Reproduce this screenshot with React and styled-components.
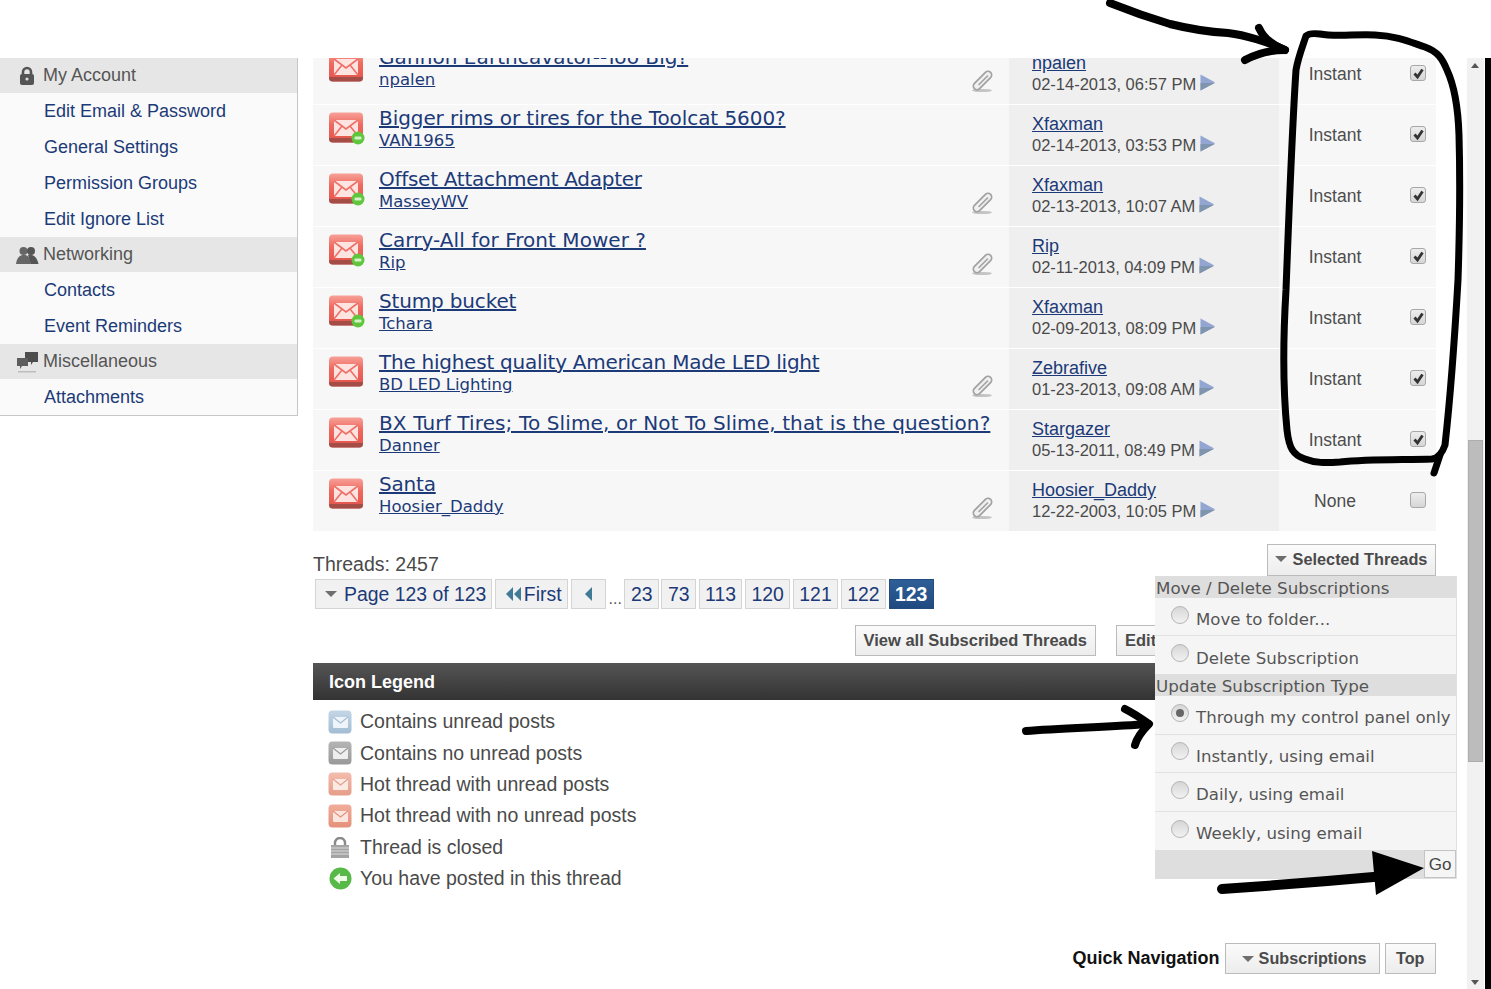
import styled, { createGlobalStyle } from "styled-components";

const GlobalStyle = createGlobalStyle`
  html, body {
    margin: 0;
    padding: 0;
    background: #fff;
    overflow: hidden;
  }
  body {
    font-family: "Liberation Sans", Arial, sans-serif;
    color: #3e3e3e;
  }
`;

const threads = [
  { title: "Gannon Earthcavator--Too Big?", track: 0.07, author: "npalen", by: "npalen", date: "02-14-2013, 06:57 PM", posted: false, clip: true, sub: "Instant", on: true },
  { title: "Bigger rims or tires for the Toolcat 5600?", track: -0.07, author: "VAN1965", by: "Xfaxman", date: "02-14-2013, 03:53 PM", posted: true, clip: false, sub: "Instant", on: true },
  { title: "Offset Attachment Adapter", track: -0.28, author: "MasseyWV", by: "Xfaxman", date: "02-13-2013, 10:07 AM", posted: true, clip: true, sub: "Instant", on: true },
  { title: "Carry-All for Front Mower ?", track: 0.04, author: "Rip", by: "Rip", date: "02-11-2013, 04:09 PM", posted: true, clip: true, sub: "Instant", on: true },
  { title: "Stump bucket", track: -0.16, author: "Tchara", by: "Xfaxman", date: "02-09-2013, 08:09 PM", posted: true, clip: false, sub: "Instant", on: true },
  { title: "The highest quality American Made LED light", track: -0.25, author: "BD LED Lighting", by: "Zebrafive", date: "01-23-2013, 09:08 AM", posted: false, clip: true, sub: "Instant", on: true },
  { title: "BX Turf Tires; To Slime, or Not To Slime, that is the question?", track: 0.13, author: "Danner", by: "Stargazer", date: "05-13-2011, 08:49 PM", posted: false, clip: false, sub: "Instant", on: true },
  { title: "Santa", track: -0.2, author: "Hoosier_Daddy", by: "Hoosier_Daddy", date: "12-22-2003, 10:05 PM", posted: false, clip: true, sub: "None", on: false },
];

const sideNav = [
  { name: "My Account", icon: "lock", items: ["Edit Email & Password", "General Settings", "Permission Groups", "Edit Ignore List"] },
  { name: "Networking", icon: "people", items: ["Contacts", "Event Reminders"] },
  { name: "Miscellaneous", icon: "chat", items: ["Attachments"] },
];

const legend = [
  { label: "Contains unread posts", top: "#c3d6e6", bottom: "#a3bdd3", flap: "#eef4f9" },
  { label: "Contains no unread posts", top: "#b5b5b5", bottom: "#999", flap: "#eeeeee" },
  { label: "Hot thread with unread posts", top: "#f3bdae", bottom: "#e59d89", flap: "#fbeae4" },
  { label: "Hot thread with no unread posts", top: "#f0ad9a", bottom: "#e4907a", flap: "#fbe6df" },
  { label: "Thread is closed", lock: true },
  { label: "You have posted in this thread", back: true },
];

const menuGroups = [
  { title: "Move / Delete Subscriptions", rowH: 38, options: [{ label: "Move to folder..." }, { label: "Delete Subscription" }] },
  {
    title: "Update Subscription Type",
    rowH: 38.5,
    options: [
      { label: "Through my control panel only", checked: true },
      { label: "Instantly, using email" },
      { label: "Daily, using email" },
      { label: "Weekly, using email" },
    ],
  },
];

const pages = ["23", "73", "113", "120", "121", "122"];

const MailIcon = () => (
  <svg width="36" height="31" viewBox="0 0 36 31">
    <defs>
      <linearGradient id="hotMail" x1="0" y1="0" x2="0" y2="1">
        <stop offset="0" stopColor="#f7a198" />
        <stop offset="0.4" stopColor="#ef6a60" />
        <stop offset="1" stopColor="#e2524a" />
      </linearGradient>
    </defs>
    <rect x="1" y="0.5" width="34" height="30" rx="4" fill="url(#hotMail)" />
    <path d="M1 26 H35 V27 a3.5 3.5 0 0 1 -3.5 3.5 H4.5 A3.5 3.5 0 0 1 1 27 Z" fill="#8f4a44" opacity="0.75" />
    <rect x="6" y="8" width="24" height="16" fill="#fde4e0" />
    <path d="M6 8 L18 17 L30 8 M6 24 L14 14 M30 24 L22 14" fill="none" stroke="#ee6f66" strokeWidth="1.6" />
  </svg>
);

const LegendMail = ({ top, bottom, flap }) => (
  <svg width="24" height="24" viewBox="0 0 24 24">
    <defs>
      <linearGradient id={`legend${bottom.slice(1)}`} x1="0" y1="0" x2="0" y2="1">
        <stop offset="0" stopColor={top} />
        <stop offset="1" stopColor={bottom} />
      </linearGradient>
    </defs>
    <rect x="0.5" y="0.5" width="23" height="23" rx="4" fill={`url(#legend${bottom.slice(1)})`} />
    <rect x="5" y="7" width="15" height="11" rx="1" fill={flap} />
    <path d="M5 7 L12.5 13 L20 7" fill="none" stroke={bottom} strokeWidth="1.2" />
  </svg>
);

const PostedDot = () => (
  <svg width="14" height="14" viewBox="0 0 14 14">
    <circle cx="7" cy="7" r="6.5" fill="#5fc63d" />
    <rect x="3.5" y="5.5" width="7" height="3" rx="1.2" fill="#d5f2c9" />
  </svg>
);

const ClipIcon = () => (
  <svg width="24" height="24" viewBox="0 0 24 24">
    <ellipse cx="11" cy="21.5" rx="10" ry="1.6" fill="#c4c4c4" />
    <path d="M6 17 L17 6" fill="none" stroke="#a2a2a2" strokeWidth="9" strokeLinecap="round" />
    <path d="M6 17 L17 6" fill="none" stroke="#f0f0f0" strokeWidth="5.5" strokeLinecap="round" />
    <path d="M8 15.5 L16.5 7" fill="none" stroke="#a2a2a2" strokeWidth="1.6" strokeLinecap="round" />
  </svg>
);

const NextSvg = styled.svg`
  flex: none;
  margin-top: -4px;
`;

const NextIcon = () => (
  <NextSvg width="15" height="17" viewBox="0 0 15 17">
    <path d="M0.5 0.5 L14.5 8 Q15 8.5 14.5 9 L0.5 16.5 Z" fill="#93a6d2" />
    <path d="M0.5 9 L14.7 9 L0.5 16.5 Z" fill="#7f95ae" />
  </NextSvg>
);

const DoubleLeft = () => (
  <svg width="15" height="14" viewBox="0 0 15 14">
    <path d="M7 0 V14 L0 7 Z M15 0 V14 L8 7 Z" fill="#3f7a96" />
  </svg>
);

const SideIcon = ({ name }) => {
  if (name === "lock") {
    return (
      <svg width="18" height="20" viewBox="0 0 18 20">
        <path d="M5 9 V6 a4 4 0 0 1 8 0 V9" fill="none" stroke="#555" strokeWidth="2.6" />
        <rect x="2" y="8" width="14" height="11" rx="2" fill="#555" />
        <circle cx="9" cy="13" r="1.6" fill="#ddd" />
      </svg>
    );
  }
  if (name === "people") {
    return (
      <svg width="24" height="20" viewBox="0 0 24 20">
        <circle cx="8.5" cy="6" r="4" fill="#666" />
        <circle cx="16" cy="6" r="4" fill="#555" />
        <path d="M1 19 C2 11 6 10 9 10 C12 10 15 11 16 19 Z" fill="#666" />
        <path d="M13 10 C18 9 22 12 23.5 19 L16 19 Z" fill="#555" />
      </svg>
    );
  }
  return (
    <svg width="22" height="22" viewBox="0 0 22 22">
      <path d="M9 1 H22 V11 H17 L15 14 V11 H9 Z" fill="#4d4d4d" />
      <path d="M1 7 H12 V15 H6 L4 18 V15 H1 Z" fill="#5d5d5d" />
      <rect x="2" y="20" width="18" height="1.5" fill="#bdbdbd" />
    </svg>
  );
};

const ClosedIcon = () => (
  <svg width="22" height="21" viewBox="0 0 22 21">
    <path d="M6 9 V6 a5 5 0 0 1 10 0 V9" fill="none" stroke="#8a8a8a" strokeWidth="2.4" />
    <rect x="2" y="8" width="18" height="13" fill="#a4a4a4" />
    <path d="M2 11 H20 M2 14 H20 M2 17 H20" stroke="#dcdcdc" strokeWidth="1" />
  </svg>
);

const BackIcon = () => (
  <svg width="23" height="23" viewBox="0 0 23 23">
    <circle cx="11.5" cy="11.5" r="11" fill="#57b947" />
    <path d="M4.5 11.5 L11 6 V9 H18 V14 H11 V17 Z" fill="#eefbe9" />
  </svg>
);

const Caret = styled.span`
  display: inline-block;
  flex: none;
  width: 0;
  height: 0;
  border-left: 6px solid transparent;
  border-right: 6px solid transparent;
  border-top: 6px solid #6e6e6e;
`;

const Page = styled.div`
  width: 1491px;
  height: 989px;
  position: relative;
  overflow: hidden;
  background: #fff;
`;

const TopGap = styled.div`
  height: 58px;
`;

const Viewport = styled.div`
  height: 931px;
  display: flex;
  overflow: hidden;
`;

const Content = styled.div`
  width: 1467px;
  display: flex;
  align-items: flex-start;
`;

const Sidebar = styled.nav`
  width: 297px;
  flex: none;
  border-right: 1px solid #c6c6c6;
  border-bottom: 1px solid #c6c6c6;
  background: #fafafa;
`;

const SideHead = styled.div`
  height: 35px;
  background: #e6e6e6;
  display: flex;
  align-items: center;
  font-size: 18px;
  color: #555;
`;

const SideIconBox = styled.span`
  width: 43px;
  flex: none;
  display: flex;
  justify-content: center;
  padding-left: 10px;
  box-sizing: border-box;
`;

const SideItem = styled.a`
  display: flex;
  align-items: center;
  height: 36px;
  padding-left: 44px;
  font-size: 18px;
  color: #1c3a78;
`;

const Main = styled.main`
  margin-left: 15px;
  width: 1123px;
  flex: none;
`;

const ThreadList = styled.div`
  margin-top: -14px;
`;

const Row = styled.div`
  display: grid;
  grid-template-columns: 696px 270px 157px;
  height: 60px;
  margin-bottom: 1px;
`;

const TitleCell = styled.div`
  background: #f7f7f7;
  position: relative;
  display: flex;
  padding-left: 15px;
`;

const MailWrap = styled.div`
  position: relative;
  width: 36px;
  height: 31px;
  margin-top: 7px;
  flex: none;
`;

const DotWrap = styled.span`
  position: absolute;
  right: -1px;
  bottom: -2px;
  display: block;
  line-height: 0;
`;

const TitleText = styled.div`
  margin-left: 15px;
  padding-top: 1px;
  font-family: "DejaVu Sans", Verdana, sans-serif;
`;

const ThreadTitle = styled.a`
  display: block;
  font-size: 20px;
  line-height: 25px;
  letter-spacing: ${({ $track }) => $track}px;
  color: #1c3a78;
  text-decoration: underline;
`;

const ThreadAuthor = styled.a`
  display: block;
  font-size: 16.5px;
  line-height: 20px;
  color: #1c3a78;
  text-decoration: underline;
`;

const ClipWrap = styled.span`
  position: absolute;
  right: 14px;
  top: 25px;
  line-height: 0;
`;

const LastCell = styled.div`
  background: #efefef;
  padding: 9px 0 0 23px;
`;

const LastBy = styled.a`
  display: block;
  font-size: 18px;
  line-height: 21px;
  color: #1c3a78;
  text-decoration: underline;
`;

const LastDate = styled.div`
  display: flex;
  align-items: center;
  gap: 4px;
  font-size: 16.5px;
  line-height: 21px;
  color: #4a4a4a;
`;

const SubCell = styled.div`
  background: #f7f7f7;
  display: flex;
  align-items: center;
  position: relative;
`;

const SubLabel = styled.span`
  width: 112px;
  text-align: center;
  font-size: 17.5px;
  color: #4d4d4d;
`;

const Check = styled.span`
  position: absolute;
  right: 10px;
  top: 21px;
  width: 14px;
  height: 14px;
  border: 1px solid #a8a8a8;
  border-radius: 3px;
  background: linear-gradient(#ededed, #d6d6d6);
  display: flex;
  align-items: center;
  justify-content: center;
`;

const Meta = styled.div`
  display: flex;
  justify-content: space-between;
  align-items: flex-start;
  margin-top: 12px;
`;

const MetaLeft = styled.div`
  padding-top: 9px;
  font-size: 19.5px;
  line-height: 24px;
  color: #4a4a4a;
`;

const SelectedBtn = styled.button`
  width: 169px;
  height: 32px;
  margin-top: 1px;
  padding: 0 1px 2px 0;
  border: 1px solid #bbb;
  background: linear-gradient(#fbfbfb, #ececec);
  font: bold 16.3px "Liberation Sans", Arial, sans-serif;
  color: #4a4a4a;
  display: flex;
  align-items: center;
  justify-content: center;
  gap: 6px;
`;

const Pager = styled.div`
  display: flex;
  align-items: flex-end;
  gap: 2.5px;
  margin: 3px 0 0 2px;
  height: 30px;
`;

const PageBtn = styled.a`
  height: 28px;
  padding: 0 ${({ $right }) => $right ?? 5.5}px 0 ${({ $left }) => $left ?? 5.5}px;
  border: 1px solid ${({ $active }) => ($active ? "#234b80" : "#d4d4d4")};
  background: ${({ $active }) => ($active ? "linear-gradient(#2f5f98, #1f4a80)" : "#f1f1f1")};
  color: ${({ $active }) => ($active ? "#fff" : "#1c3a78")};
  font-size: 19.4px;
  font-weight: ${({ $active }) => ($active ? "bold" : "normal")};
  display: flex;
  align-items: center;
  gap: ${({ $gap }) => $gap ?? 0}px;
`;

const PageDots = styled.span`
  font-size: 16px;
  color: #555;
  align-self: flex-end;
  margin-bottom: 1px;
`;

const SmallArrow = styled.span`
  display: inline-block;
  width: 0;
  height: 0;
  border-top: 7px solid transparent;
  border-bottom: 7px solid transparent;
  border-right: 7px solid #3f7a96;
`;

const Actions = styled.div`
  display: flex;
  justify-content: flex-end;
  gap: 20px;
  margin-top: 16px;
`;

const ActionBtn = styled.button`
  height: 31px;
  width: ${({ $width }) => ($width ? `${$width}px` : "auto")};
  padding: 0 8px;
  border: 1px solid #bbb;
  background: linear-gradient(#fbfbfb, #ececec);
  font: bold 16.5px "Liberation Sans", Arial, sans-serif;
  color: #4a4a4a;
  text-align: left;
  white-space: nowrap;
`;

const LegendBar = styled.div`
  height: 36px;
  margin-top: 7px;
  padding: 1px 0 0 16px;
  display: flex;
  align-items: center;
  background: linear-gradient(#555, #333);
  color: #fff;
  font-size: 18px;
  font-weight: bold;
`;

const LegendList = styled.ul`
  list-style: none;
  margin: 6px 0 0;
  padding: 0 0 0 15px;
`;

const LegendRow = styled.li`
  height: 31.4px;
  display: flex;
  align-items: center;
  font-size: 19.5px;
  color: #4a4a4a;
`;

const LegendIconBox = styled.span`
  width: 24px;
  margin-right: 8px;
  line-height: 0;
  display: flex;
  justify-content: center;
`;

const QuickNav = styled.div`
  display: flex;
  justify-content: flex-end;
  align-items: center;
  gap: 5px;
  margin-top: 49px;
`;

const QuickLabel = styled.span`
  font-size: 18px;
  font-weight: bold;
  color: #111;
`;

const QuickBtn = styled(ActionBtn)`
  display: flex;
  align-items: center;
  gap: 5px;
  font-size: 16.2px;
  padding: 0 ${({ $right }) => $right ?? 10.5}px 0 ${({ $left }) => $left ?? 10.5}px;
`;

const Menu = styled.div`
  position: absolute;
  left: 1155px;
  top: 576px;
  width: 301px;
  background: #f5f5f5;
  border-right: 1px solid #e0e0e0;
  font-family: "DejaVu Sans", Verdana, sans-serif;
  color: #555;
`;

const MenuHead = styled.div`
  height: 22px;
  line-height: 24px;
  padding-left: 1px;
  background: #dedede;
  font-size: 16.7px;
  color: #555;
`;

const MenuOption = styled.label`
  height: ${({ $h }) => $h}px;
  box-sizing: border-box;
  display: flex;
  align-items: center;
  padding-left: 16px;
  font-size: 16.6px;
  white-space: nowrap;
  border-bottom: ${({ $last }) => ($last ? "none" : "1px solid #e2e2e2")};
`;

const OptionText = styled.span`
  margin-top: 6px;
`;

const Radio = styled.span`
  width: 16px;
  height: 16px;
  flex: none;
  margin: -4px 7px 0 0;
  border: 1px solid #b5b5b5;
  border-radius: 50%;
  background: linear-gradient(#d6d6d6, #f2f2f2);
  display: flex;
  align-items: center;
  justify-content: center;
`;

const RadioDot = styled.span`
  width: 8px;
  height: 8px;
  border-radius: 50%;
  background: #666;
`;

const MenuFoot = styled.div`
  height: 29px;
  background: #dedede;
  display: flex;
  justify-content: flex-end;
  align-items: flex-start;
`;

const GoBtn = styled.button`
  width: 32px;
  height: 28px;
  padding: 2px 0 0;
  border: 1px solid #c4c4c4;
  background: #f5f5f5;
  font: 17px "Liberation Sans", Arial, sans-serif;
  color: #444;
`;

const Scrollbar = styled.div`
  width: 17px;
  margin-right: 1px;
  flex: none;
  background: #f1f1f1;
  position: relative;
`;

const ScrollThumb = styled.div`
  position: absolute;
  left: 1px;
  width: 13px;
  top: 382px;
  height: 320px;
  background: #bcbcbc;
  border: 1px solid #adadad;
  box-sizing: content-box;
`;

const ScrollArrow = styled.span`
  position: absolute;
  left: 4px;
  ${({ $down }) => ($down ? "bottom: 4px; border-top: 5px solid #555;" : "top: 5px; border-bottom: 5px solid #555;")}
  width: 0;
  height: 0;
  border-left: 4px solid transparent;
  border-right: 4px solid transparent;
`;

const EdgeLine = styled.div`
  width: 6px;
  flex: none;
  background: #000;
`;

const Marker = styled.svg`
  position: absolute;
  left: 0;
  top: 0;
  pointer-events: none;
`;

const App = () => (
  <Page>
    <GlobalStyle />
    <TopGap />
    <Viewport>
      <Content>
        <Sidebar>
          {sideNav.map((group) => (
            <div key={group.name}>
              <SideHead>
                <SideIconBox>
                  <SideIcon name={group.icon} />
                </SideIconBox>
                {group.name}
              </SideHead>
              {group.items.map((item) => (
                <SideItem key={item}>{item}</SideItem>
              ))}
            </div>
          ))}
        </Sidebar>
        <Main>
          <ThreadList>
            {threads.map((t) => (
              <Row key={t.title}>
                <TitleCell>
                  <MailWrap>
                    <MailIcon />
                    {t.posted && (
                      <DotWrap>
                        <PostedDot />
                      </DotWrap>
                    )}
                  </MailWrap>
                  <TitleText>
                    <ThreadTitle $track={t.track}>{t.title}</ThreadTitle>
                    <ThreadAuthor>{t.author}</ThreadAuthor>
                  </TitleText>
                  {t.clip && (
                    <ClipWrap>
                      <ClipIcon />
                    </ClipWrap>
                  )}
                </TitleCell>
                <LastCell>
                  <LastBy>{t.by}</LastBy>
                  <LastDate>
                    {t.date}
                    <NextIcon />
                  </LastDate>
                </LastCell>
                <SubCell>
                  <SubLabel>{t.sub}</SubLabel>
                  <Check>
                    {t.on && (
                      <svg width="13" height="13" viewBox="0 0 13 13">
                        <path d="M2.5 6.5 L5.5 10 L10.5 2.5" fill="none" stroke="#333" strokeWidth="2.8" />
                      </svg>
                    )}
                  </Check>
                </SubCell>
              </Row>
            ))}
          </ThreadList>
          <Meta>
            <MetaLeft>Threads: 2457</MetaLeft>
            <SelectedBtn>
              <Caret />
              Selected Threads
            </SelectedBtn>
          </Meta>
          <Pager>
            <PageBtn $left={9} $right={5} $gap={7}>
              <Caret />
              Page 123 of 123
            </PageBtn>
            <PageBtn $left={10} $right={5.5} $gap={3}>
              <DoubleLeft />
              First
            </PageBtn>
            <PageBtn $left={13.25} $right={13.25}>
              <SmallArrow />
            </PageBtn>
            <PageDots>...</PageDots>
            {pages.map((p) => (
              <PageBtn key={p}>{p}</PageBtn>
            ))}
            <PageBtn $active>123</PageBtn>
          </Pager>
          <Actions>
            <ActionBtn>View all Subscribed Threads</ActionBtn>
            <ActionBtn $width={320}>Edit Folders</ActionBtn>
          </Actions>
          <LegendBar>Icon Legend</LegendBar>
          <LegendList>
            {legend.map((l) => (
              <LegendRow key={l.label}>
                <LegendIconBox>
                  {l.lock ? <ClosedIcon /> : l.back ? <BackIcon /> : <LegendMail top={l.top} bottom={l.bottom} flap={l.flap} />}
                </LegendIconBox>
                {l.label}
              </LegendRow>
            ))}
          </LegendList>
          <QuickNav>
            <QuickLabel>Quick Navigation</QuickLabel>
            <QuickBtn $left={16} $right={12}>
              <Caret />
              Subscriptions
            </QuickBtn>
            <QuickBtn>Top</QuickBtn>
          </QuickNav>
        </Main>
      </Content>
      <Scrollbar>
        <ScrollArrow />
        <ScrollThumb />
        <ScrollArrow $down />
      </Scrollbar>
      <EdgeLine />
    </Viewport>
    <Menu>
      {menuGroups.map((g) => (
        <div key={g.title}>
          <MenuHead>{g.title}</MenuHead>
          {g.options.map((o, i) => (
            <MenuOption key={o.label} $h={g.rowH} $last={i === g.options.length - 1}>
              <Radio>{o.checked && <RadioDot />}</Radio>
              <OptionText>{o.label}</OptionText>
            </MenuOption>
          ))}
        </div>
      ))}
      <MenuFoot>
        <GoBtn>Go</GoBtn>
      </MenuFoot>
    </Menu>
    <Marker width="1491" height="989" viewBox="0 0 1491 989">
      <g fill="none" stroke="#000" strokeWidth="7" strokeLinecap="round" strokeLinejoin="round">
        <path d="M1110 3 C1130 11 1150 18 1170 24 C1190 29 1210 32 1228 33 C1245 35 1268 42 1285 50" strokeWidth="8" />
        <path d="M1259 28 C1263 37 1272 45 1285 50 C1270 50 1256 54 1245 60" strokeWidth="8" />
        <path d="M1306 36 C1302 48 1298 58 1296 70 C1292 130 1289 210 1286 290 C1283 340 1283 390 1287 430 C1289 448 1293 455 1305 459 C1315 463 1325 463 1340 462 C1370 459 1405 460 1432 459 C1438 458 1442 454 1445 445 C1450 400 1454 350 1458 280 C1460 220 1460 170 1459 135 C1458 105 1454 85 1447 70 C1442 58 1438 52 1425 47 C1410 42 1398 36 1375 35 C1355 34 1335 37 1320 34 C1312 33 1308 34 1306 36 Z" />
        <path d="M1440 455 L1434 473" />
        <path d="M1026 731 C1060 728 1110 727 1148 724" strokeWidth="8" />
        <path d="M1125 709 C1135 714 1142 719 1149 724 C1142 731 1137 738 1135 745" strokeWidth="8" />
        <path d="M1222 889 C1280 885 1330 881 1385 876" strokeWidth="10" />
      </g>
      <path d="M1372 851 L1424 868 L1376 895 Z" fill="#000" />
    </Marker>
  </Page>
);

export default App;
